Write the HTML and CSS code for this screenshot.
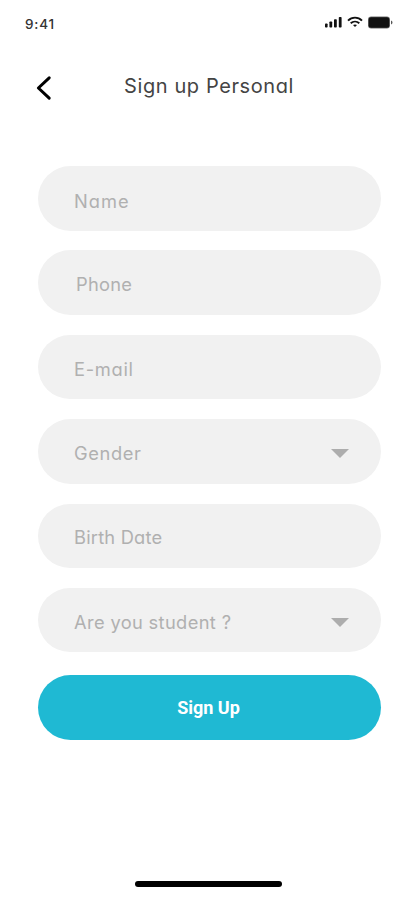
FILE: index.html
```
<!DOCTYPE html>
<html lang="en">
<head>
    <meta charset="UTF-8">
    <meta name="viewport" content="width=device-width, initial-scale=1.0">
    <title>Sign up Personal</title>
    <link rel="stylesheet" href="styles.css">
</head>
<body>
    <div class="screen">
        <div class="status-bar">
            <span class="time">9:41</span>
            <div class="status-icons">
                <svg width="18" height="12" viewBox="0 0 18 12">
                    <rect x="1" y="7.5" width="2.6" height="4" rx="0.8"/>
                    <rect x="5.4" y="5.5" width="2.8" height="6" rx="0.8"/>
                    <rect x="10" y="3.3" width="2.8" height="8.2" rx="0.8"/>
                    <rect x="14.8" y="1" width="2.8" height="10.5" rx="0.8"/>
                </svg>
                <svg width="16" height="12" viewBox="0 0 16 12" fill="none" stroke="#111" stroke-width="1.9">
                    <path d="M1 4.6C5 .6 11 .6 15 4.6"/>
                    <path d="M3.7 7.3c2.5-2.3 6.1-2.3 8.6 0"/>
                    <path d="M6 9.1c1.2-.9 2.8-.9 4 0l-2 2z" fill="#111" stroke="none"/>
                </svg>
                <svg width="26" height="13" viewBox="0 0 26 13">
                    <rect x="0" y="0.5" width="22" height="12" rx="3.2" opacity="0.6"/>
                    <rect x="0.7" y="1.2" width="20.6" height="10.6" rx="2.5"/>
                    <path d="M23 4.5c2 .8 2 3.2 0 4z" opacity="0.7"/>
                </svg>
            </div>
        </div>

        <div class="header">
            <svg class="back" width="16" height="26" viewBox="0 0 16 26">
                <path d="M13.2 2.8L2.4 13l10.8 10.2"/>
            </svg>
            <h1>Sign up Personal</h1>
        </div>

        <form class="form">
            <label class="field"><span class="name">Name</span></label>
            <label class="field"><span class="phone">Phone</span></label>
            <label class="field"><span class="email">E-mail</span></label>
            <label class="field"><span class="gender">Gender</span><i class="arrow"></i></label>
            <label class="field"><span class="birth">Birth Date</span></label>
            <label class="field"><span class="student">Are you student ?</span><i class="arrow"></i></label>
            <button type="button" class="submit">Sign Up</button>
        </form>

        <div class="home-bar"></div>
    </div>
</body>
</html>
```

FILE: styles.css
```
* {
    box-sizing: border-box;
}

body {
    margin: 0;
    background-color: #fff;
    font-family: Inter, "Liberation Sans", sans-serif;
    font-feature-settings: "cv11";
}

.screen {
    display: flex;
    flex-direction: column;
    height: 900px;
    padding-bottom: 13px;
}

.status-bar {
    display: flex;
    justify-content: space-between;
    height: 46px;
    padding: 16px 23px 0 25px;
}

.time {
    font-size: 13.5px;
    line-height: 17px;
    font-weight: 500;
    letter-spacing: 0.8px;
    color: #333;
}

.status-icons {
    display: flex;
    gap: 5px;
    fill: #111;
}

.header {
    display: flex;
    align-items: center;
    height: 120px;
    padding: 0 0 37px 36px;
}

.back {
    fill: none;
    stroke: #000;
    stroke-width: 3;
    stroke-linecap: round;
    stroke-linejoin: round;
}

h1 {
    margin: 0 0 3px 72px;
    font-size: 20px;
    font-weight: 400;
    letter-spacing: 0.6px;
    color: #444;
}

.form {
    display: flex;
    flex-direction: column;
    gap: 19.9px;
    padding: 0 36px 0 38px;
}

.field {
    display: flex;
    align-items: center;
    justify-content: space-between;
    height: 64.5px;
    padding: 4px 32px 0 36px;
    border-radius: 33px;
    background-color: #f1f1f1;
    font-size: 18.3px;
    color: #b0b0b0;
}

.name {
    margin-top: 1px;
    letter-spacing: 1px;
}

.phone {
    margin: 0 0 2px 2px;
    letter-spacing: 0.25px;
}

.email {
    letter-spacing: 0.7px;
}

.gender {
    letter-spacing: 0.6px;
}

.birth {
    margin-bottom: 2px;
    letter-spacing: 0.2px;
}

.student {
    letter-spacing: 0.35px;
}

.arrow {
    border-left: 9px solid transparent;
    border-right: 9px solid transparent;
    border-top: 9px solid #adadad;
}

.submit {
    height: 65px;
    margin-top: 3px;
    padding-right: 8px;
    border: none;
    border-radius: 33px;
    background-color: #1fb9d3;
    font-family: Roboto, sans-serif;
    font-size: 18px;
    font-weight: 700;
    color: #fff;
}

.home-bar {
    width: 147px;
    height: 6px;
    margin: auto auto 0 135px;
    border-radius: 3px;
    background-color: #000;
}
```
